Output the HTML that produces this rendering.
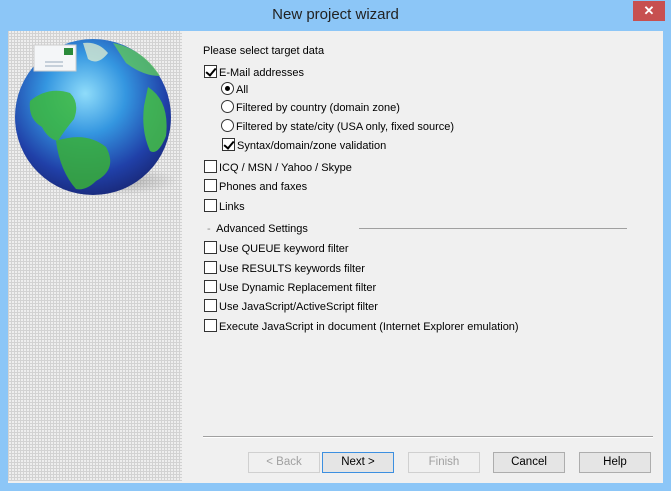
<!DOCTYPE html>
<html><head><meta charset="utf-8"><style>
*{margin:0;padding:0;box-sizing:border-box}
body{width:671px;height:491px;background:#8cc6f7;position:relative;overflow:hidden;font-family:"Liberation Sans",sans-serif;font-size:11px;color:#000}
.title{position:absolute;left:0;top:6px;width:671px;text-align:center;font-size:15px;color:#222}
.close{position:absolute;left:633px;top:1px;width:32px;height:20px;background:#c75050;color:#fff;text-align:center;font-size:13px;line-height:20px;font-weight:bold}
.client{position:absolute;left:8px;top:31px;width:655px;height:452px;background:#f0f0f0}
.left{position:absolute;left:8px;top:31px;width:174px;height:450px;background-color:#eeeeee;
background-image:linear-gradient(90deg,#d2d2d2 1px,transparent 1px),linear-gradient(0deg,#d2d2d2 1px,transparent 1px);background-size:3px 3px}
.t{position:absolute;white-space:nowrap;margin-top:2px}
.cb{position:absolute;width:13px;height:13px;border:1px solid #333;background:#fff}
.cb.on::after{content:"";position:absolute;left:3px;top:0px;width:4px;height:8px;border:solid #000;border-width:0 2px 2px 0;transform:rotate(40deg)}
.rb{position:absolute;width:13px;height:13px;border:1px solid #333;border-radius:50%;background:#fff}
.rb.on::after{content:"";position:absolute;left:3px;top:3px;width:5px;height:5px;border-radius:50%;background:#000}
.btn{position:absolute;top:452px;height:21px;width:72px;border:1px solid #adadad;background:#e5e5e5;text-align:center;line-height:19px;font-size:11.5px}
.dis{color:#a0a0a0;border-color:#d0d0d0;background:#f0f0f0}
</style></head><body>
<div class="title">New project wizard</div>
<div class="close">✕</div>
<div class="client"></div>
<div class="left"></div>
<svg style="position:absolute;left:8px;top:31px" width="174" height="190">
<defs>
<radialGradient id="g" cx="0.45" cy="0.35" r="0.65">
<stop offset="0" stop-color="#8fdcfa"/><stop offset="0.4" stop-color="#3496e0"/><stop offset="0.8" stop-color="#2040a8"/><stop offset="1" stop-color="#1a2c80"/></radialGradient>
<radialGradient id="sh" cx="0.5" cy="0.5" r="0.5"><stop offset="0" stop-color="#888" stop-opacity=".6"/><stop offset="1" stop-color="#888" stop-opacity="0"/></radialGradient>
</defs>
<ellipse cx="110" cy="150" rx="60" ry="14" fill="url(#sh)"/>
<circle cx="85" cy="86" r="78" fill="url(#g)"/>
<path d="M22 70 Q40 55 62 62 Q72 72 66 88 Q56 100 50 110 Q40 108 34 96 Q20 88 22 70Z" fill="#3cb83c" opacity=".85"/>
<path d="M48 110 Q78 100 98 116 Q110 138 88 150 Q78 160 68 158 Q52 140 48 110Z" fill="#38b038" opacity=".85"/>
<path d="M140 56 Q162 70 158 105 Q150 125 142 120 Q133 100 136 75Z" fill="#44c044" opacity=".85"/>
<path d="M105 12 Q135 18 152 45 Q135 45 118 32Z" fill="#5ec85e" opacity=".8"/>
<path d="M75 12 Q90 10 100 22 Q90 35 80 28Z" fill="#d8e8d0" opacity=".8"/>
<rect x="26" y="14" width="42" height="26" fill="#f4f6f8" stroke="#ccc"/>
<rect x="56" y="17" width="9" height="7" fill="#2a8a3a"/>
<line x1="37" y1="31" x2="55" y2="31" stroke="#9ab"/>
<line x1="37" y1="35" x2="55" y2="35" stroke="#9ab"/>
</svg>
<div class="t" style="left:203px;top:43px">Please select target data</div>
<div class="cb on" style="left:204px;top:65px"></div><div class="t" style="left:219px;top:65px">E-Mail addresses</div>
<div class="rb on" style="left:221px;top:82px"></div><div class="t" style="left:236px;top:82px">All</div>
<div class="rb" style="left:221px;top:100px"></div><div class="t" style="left:236px;top:100px">Filtered by country (domain zone)</div>
<div class="rb" style="left:221px;top:119px"></div><div class="t" style="left:236px;top:119px">Filtered by state/city (USA only, fixed source)</div>
<div class="cb on" style="left:222px;top:138px"></div><div class="t" style="left:237px;top:138px">Syntax/domain/zone validation</div>
<div class="cb" style="left:204px;top:160px"></div><div class="t" style="left:219px;top:160px">ICQ / MSN / Yahoo / Skype</div>
<div class="cb" style="left:204px;top:179px"></div><div class="t" style="left:219px;top:179px">Phones and faxes</div>
<div class="cb" style="left:204px;top:199px"></div><div class="t" style="left:219px;top:199px">Links</div>
<div class="t" style="left:207px;top:221px"><span style="color:#888">-</span>&nbsp; Advanced Settings</div>
<div style="position:absolute;left:359px;top:228px;width:268px;height:1px;background:#a0a0a0"></div>
<div class="cb" style="left:204px;top:241px"></div><div class="t" style="left:219px;top:241px">Use QUEUE keyword filter</div>
<div class="cb" style="left:204px;top:261px"></div><div class="t" style="left:219px;top:261px">Use RESULTS keywords filter</div>
<div class="cb" style="left:204px;top:280px"></div><div class="t" style="left:219px;top:280px">Use Dynamic Replacement filter</div>
<div class="cb" style="left:204px;top:299px"></div><div class="t" style="left:219px;top:299px">Use JavaScript/ActiveScript filter</div>
<div class="cb" style="left:204px;top:319px"></div><div class="t" style="left:219px;top:319px">Execute JavaScript in document (Internet Explorer emulation)</div>
<div style="position:absolute;left:203px;top:436px;width:450px;height:2px;border-top:1px solid #a0a0a0;border-bottom:1px solid #fff"></div>
<div class="btn dis" style="left:248px">&lt; Back</div>
<div class="btn" style="left:322px;border-color:#3c8fe0">Next &gt;</div>
<div class="btn dis" style="left:408px">Finish</div>
<div class="btn" style="left:493px">Cancel</div>
<div class="btn" style="left:579px">Help</div>
</body></html>
